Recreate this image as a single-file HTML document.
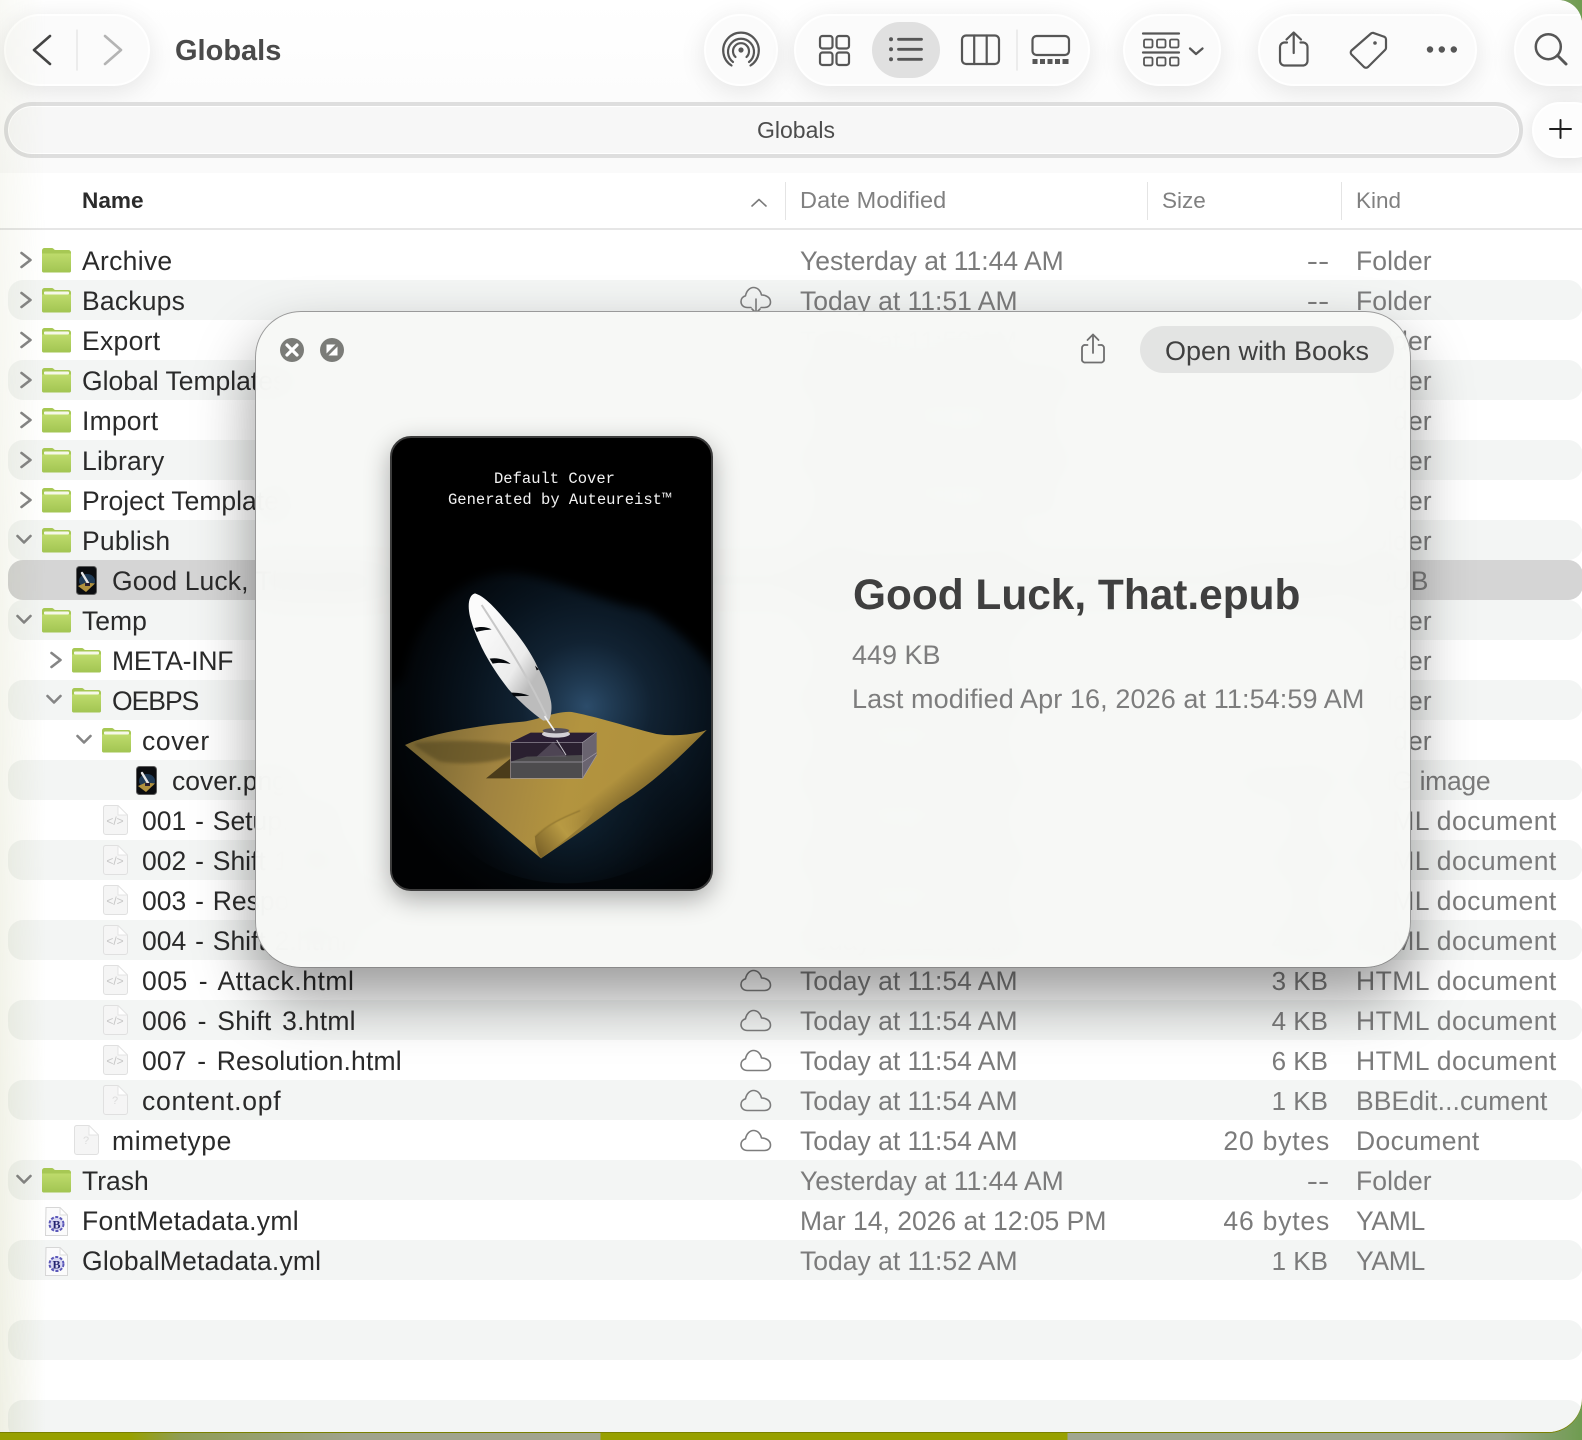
<!DOCTYPE html>
<html lang="en"><head><meta charset="utf-8"><title>Globals</title>
<style>
*{box-sizing:border-box}
html,body{margin:0;padding:0;width:1582px;height:1440px;overflow:hidden;font-family:"Liberation Sans",sans-serif;
background:linear-gradient(90deg,#97a000 0,#97a000 130px,#8f9d55 180px,#9fa38c 350px,#a2a58e 600px,#97a000 601px,#97a000 1067px,#9fa690 1068px,#a0a68f 1500px,#6f9c50 1582px)}
#win{position:absolute;left:-10px;top:0;width:1592px;height:1432px;background:#fff;border-radius:0 24px 34px 0;overflow:hidden;box-shadow:0 1px 0 #7a8000}
#in{position:absolute;left:10px;top:0;width:1582px;height:1432px}
#tb{position:absolute;left:0;top:0;width:1582px;height:173px;background:linear-gradient(#fff,#fafafa);overflow:hidden}
.p{position:absolute;top:14px;height:72px;border-radius:36px;background:#fbfbfb;border:2px solid #fff;box-shadow:0 5px 26px rgba(0,0,0,.10)}
#title{position:absolute;left:175px;top:33px;font-size:29px;line-height:36px;font-weight:700;color:#4a4a4a}
#tab{position:absolute;left:4px;top:102px;width:1519px;height:56px;border-radius:28px;border:4px solid #dedede;background:#f7f7f7;box-shadow:inset 0 0 0 1px #fff}
#tabt{position:absolute;left:757px;top:117px;font-size:23px;line-height:26px;color:#4c4c4c}
#plus{position:absolute;left:1532px;top:102px;width:70px;height:56px;border-radius:28px;background:#fdfdfd;border:2px solid #fff;box-shadow:0 3px 18px rgba(0,0,0,.10)}
.h{position:absolute;top:187px;line-height:27px;font-size:22.500px;color:#808080}
.sep{position:absolute;top:182px;width:1px;height:38px;background:#e4e4e4}
#hl{position:absolute;left:0;top:228px;width:1582px;height:2px;background:#e6e6e6}
#rows{position:absolute;left:8px;top:240px;width:1575px}
.r{position:relative;height:40px;border-radius:15px;font-size:26.500px;line-height:40px;color:#2a2a2a;white-space:nowrap}
.o{background:#f3f5f4}
.sel{background:#d5d5d5}
.r>*{position:absolute}
.n{top:1px}
.h1{word-spacing:3px}
.h2{word-spacing:1.500px}
.d{left:792px;font-size:26.500px;color:#7b7b7b;top:1px}
.s{right:255px;font-size:26px;color:#7b7b7b;top:1px}
.z{right:254px;transform:scaleX(1.3);transform-origin:100% 50%}
.b{letter-spacing:.8px;right:253px;font-size:26.500px}
.k{left:1348px;color:#7b7b7b;top:1px;letter-spacing:.1px}
.kh{letter-spacing:.45px}
.c{top:10px;width:16px;height:20px}
.f{top:7px;width:29px;height:26px}
.cl{left:732px;top:9px;width:32px;height:24px}
.doc{width:25px;height:30px;top:5px}
.th{top:6px;width:21px;height:29px}
.yml{top:7px;width:23px;height:29px}
#lg{position:absolute;left:0;top:0;width:46px;height:1432px;background:linear-gradient(90deg,#eff0e4,rgba(255,255,255,0));mix-blend-mode:multiply;pointer-events:none;-webkit-mask-image:linear-gradient(rgba(0,0,0,.35),#000);mask-image:linear-gradient(rgba(0,0,0,.35),#000)}
#m{position:absolute;left:255px;top:311px;width:1156px;height:657px;border-radius:46px;background:rgba(247,248,246,.95);backdrop-filter:blur(16px);border:1px solid #9a9a9a;border-bottom-color:#8a8a8a;box-shadow:0 30px 60px rgba(0,0,0,.40)}
#btn{position:absolute;left:1140px;top:326px;width:254px;height:47px;border-radius:24px;background:#e3e4e3;color:#404040;font-size:27px;line-height:51px;text-align:center}
#cv{position:absolute;left:390px;top:436px;width:323px;height:455px;border-radius:21px;background:#000;border:2px solid #3c3c3c;overflow:hidden;box-shadow:0 8px 26px rgba(0,0,0,.32)}
.mono{position:absolute;font-family:"Liberation Mono",monospace;font-size:15.500px;line-height:20px;color:#f2f2f2;white-space:nowrap}
.mt{position:absolute;left:852px;white-space:nowrap}
</style></head><body>

<svg width="0" height="0" style="position:absolute">
<defs>
<linearGradient id="fg" x1="0" y1="0" x2="0" y2="1"><stop offset="0" stop-color="#bedb6c"/><stop offset="1" stop-color="#a2c552"/></linearGradient>
<symbol id="ch-r" viewBox="0 0 16 20"><polyline points="3.500,3 12.500,10 3.500,17" fill="none" stroke="#858585" stroke-width="2.600" stroke-linecap="round" stroke-linejoin="round"/></symbol>
<symbol id="ch-d" viewBox="0 0 16 20"><polyline points="1.500,6 8,12.500 14.500,6" fill="none" stroke="#858585" stroke-width="2.600" stroke-linecap="round" stroke-linejoin="round"/></symbol>
<symbol id="fo" viewBox="0 0 29 26"><path d="M0 3.500A2.500 2.500 0 0 1 2.500 1H10c1.500 0 2 2 3.500 2H26.500A2.500 2.500 0 0 1 29 5.500V23.500A2 2 0 0 1 27 25.500H2A2 2 0 0 1 0 23.500Z" fill="#a7c854"/><path d="M0 6.500H29V23.500A2 2 0 0 1 27 25.500H2A2 2 0 0 1 0 23.500Z" fill="url(#fg)"/></symbol>
<symbol id="ff" viewBox="0 0 29 26"><path d="M0 3.500A2.500 2.500 0 0 1 2.500 1H10c1.500 0 2 2 3.500 2H26.500A2.500 2.500 0 0 1 29 5.500V23.500A2 2 0 0 1 27 25.500H2A2 2 0 0 1 0 23.500Z" fill="#a7c854"/><rect x="2" y="4.500" width="25" height="3" rx="1" fill="#f6f8ea"/><path d="M0 7.500H29V23.500A2 2 0 0 1 27 25.500H2A2 2 0 0 1 0 23.500Z" fill="url(#fg)"/></symbol>
<symbol id="cl" viewBox="0 0 32 24"><path d="M7.500 21.500C3.500 21.500 1 19 1 15.500 1 12.500 3 10.500 5.500 9.800 6.500 4.500 10 1.500 13.500 1.500 17.500 1.500 20.500 4.500 21.500 9 26 9 30.500 11.500 30.500 16 30.500 19.500 28 21.500 24.500 21.500Z" fill="none" stroke="#7d7d7d" stroke-width="1.600" stroke-linejoin="round"/></symbol>
<symbol id="doc" viewBox="0 0 25 30"><path d="M2.500.500H15L24.500 10V27A2.500 2.500 0 0 1 22 29.500H3A2.500 2.500 0 0 1 .500 27V3A2.500 2.500 0 0 1 2.500.500Z" fill="#f5f5f5" stroke="#e0e0e0"/><path d="M15 .500V10H24.500Z" fill="#fff" stroke="#e4e4e4"/></symbol>
<symbol id="th" viewBox="0 0 21 29"><rect x=".5" y=".5" width="20" height="28" rx="3" fill="#0b0d10" stroke="#5a5a5a"/><ellipse cx="11" cy="15" rx="8" ry="7" fill="#1f3a55"/><path d="M2 20L10 16.500 19 17.500 10 26Z" fill="#b0913e"/><path d="M6 7L12 17" stroke="#e8e8e8" stroke-width="2.400" stroke-linecap="round"/><rect x="9" y="17" width="5" height="3" fill="#2a2030"/></symbol>
<symbol id="yml" viewBox="0 0 23 29"><path d="M1 .500H15L22.500 8V28.500H.5Z" fill="#fbfbfb" stroke="#d6d6d6"/><path d="M15 .500V8H22.500Z" fill="#fff" stroke="#dcdcdc"/><circle cx="11.500" cy="17" r="7" fill="#d9d8f2" stroke="#5a57b8" stroke-width="2" stroke-dasharray="3 1.500"/></symbol>
<radialGradient id="gl" gradientUnits="userSpaceOnUse" cx="620" cy="440" r="650"><stop offset="0" stop-color="#2c4c6a"/><stop offset=".12" stop-color="#203a52"/><stop offset=".3" stop-color="#112232"/><stop offset=".55" stop-color="#08131d"/><stop offset=".8" stop-color="#03070b"/><stop offset="1" stop-color="#010203"/></radialGradient>
<radialGradient id="gl2" gradientUnits="userSpaceOnUse" cx="560" cy="740" r="360"><stop offset="0" stop-color="#12283a"/><stop offset=".6" stop-color="#0a1722" stop-opacity=".5"/><stop offset="1" stop-color="#05080c" stop-opacity="0"/></radialGradient>
<linearGradient id="pp" gradientUnits="userSpaceOnUse" x1="120" y1="500" x2="780" y2="640"><stop offset="0" stop-color="#7a6733"/><stop offset=".35" stop-color="#a08340"/><stop offset=".7" stop-color="#b3943f"/><stop offset="1" stop-color="#b0913d"/></linearGradient>
<linearGradient id="pe" gradientUnits="userSpaceOnUse" x1="680" y1="678" x2="720" y2="730"><stop offset="0" stop-color="#5f4c1f" stop-opacity="0"/><stop offset="1" stop-color="#5f4c1f" stop-opacity=".45"/></linearGradient>
<linearGradient id="fe" gradientUnits="userSpaceOnUse" x1="290" y1="210" x2="480" y2="330"><stop offset="0" stop-color="#fbfbfb"/><stop offset=".7" stop-color="#ececec"/><stop offset="1" stop-color="#bcbcbc"/></linearGradient>
<linearGradient id="fo2" gradientUnits="userSpaceOnUse" x1="480" y1="880" x2="650" y2="745"><stop offset="0" stop-color="#7d6429"/><stop offset=".45" stop-color="#b89a43"/><stop offset="1" stop-color="#b0913d" stop-opacity="0"/></linearGradient>
<filter id="b1" x="-20%" y="-20%" width="140%" height="140%"><feGaussianBlur stdDeviation="14"/></filter>
<filter id="b2"><feGaussianBlur stdDeviation="5"/></filter>
<filter id="b3"><feGaussianBlur stdDeviation="1.500"/></filter>
</defs>
</svg>

<div id="win"><div id="in">

<div id="tb">
 <div class="p" style="left:4px;width:146px"></div>
 <div class="p" style="left:704px;width:74px"></div>
 <div class="p" style="left:794px;width:296px"></div>
 <div style="position:absolute;left:872px;top:22px;width:68px;height:56px;border-radius:28px;background:#e0e0e0"></div>
 <div class="p" style="left:1123px;width:98px"></div>
 <div class="p" style="left:1258px;width:219px"></div>
 <div class="p" style="left:1514px;width:100px"></div>
 <div id="title">Globals</div>
 <div id="tab"></div>
 <div id="tabt">Globals</div>
 <div id="plus"></div>
 <svg width="1582" height="173" viewBox="0 0 1582 173" style="position:absolute;left:0;top:0" fill="none" stroke="#565656" stroke-width="2.200" stroke-linecap="round" stroke-linejoin="round">
  <polyline points="50,36 34,50 50,64" stroke="#444" stroke-width="2.600"/>
  <line x1="77" y1="30" x2="77" y2="70" stroke="#e8e8e8" stroke-width="1.500"/>
  <polyline points="105,36 121,50 105,64" stroke="#b4b4b4" stroke-width="2.600"/>
  <!-- airdrop -->
  <circle cx="741" cy="50" r="2.600" fill="#565656" stroke="none"/>
  <path d="M735.500 57A8 8 0 1 1 746.500 57"/>
  <path d="M733 62A13 13 0 1 1 749 62"/>
  <path d="M731.500 65.500A17.800 17.800 0 1 1 750.500 65.500"/>
  <!-- grid -->
  <rect x="820" y="36" width="12.500" height="12.500" rx="2.500"/><rect x="836.500" y="36" width="12.500" height="12.500" rx="2.500"/>
  <rect x="820" y="52.500" width="12.500" height="12.500" rx="2.500"/><rect x="836.500" y="52.500" width="12.500" height="12.500" rx="2.500"/>
  <!-- list -->
  <circle cx="891" cy="39.300" r="2" fill="#565656" stroke="none"/><circle cx="891" cy="49.300" r="2" fill="#565656" stroke="none"/><circle cx="891" cy="59.300" r="2" fill="#565656" stroke="none"/>
  <path d="M898.500 39.300H921.500M898.500 49.300H921.500M898.500 59.300H921.500" stroke-width="2.800"/>
  <!-- columns -->
  <rect x="962" y="35.500" width="37" height="28.500" rx="4"/><path d="M974.200 35.500V64M986.700 35.500V64"/>
  <line x1="1017" y1="30" x2="1017" y2="70" stroke="#e8e8e8" stroke-width="1.500"/>
  <!-- gallery -->
  <rect x="1032.500" y="36" width="36.500" height="19" rx="4"/>
  <g fill="#565656" stroke="none"><rect x="1032.500" y="59" width="5" height="5"/><rect x="1040" y="59" width="5" height="5"/><rect x="1047.500" y="59" width="5" height="5"/><rect x="1055" y="59" width="5" height="5"/><rect x="1062.500" y="59" width="6" height="5"/></g>
  <!-- group -->
  <path d="M1143 33.500H1179M1143 52.500H1179"/>
  <g stroke-width="1.800"><rect x="1144" y="39.500" width="8.500" height="8" rx="1.500"/><rect x="1157" y="39.500" width="8.500" height="8" rx="1.500"/><rect x="1170" y="39.500" width="8.500" height="8" rx="1.500"/>
  <rect x="1144" y="57.500" width="8.500" height="8" rx="1.500"/><rect x="1157" y="57.500" width="8.500" height="8" rx="1.500"/><rect x="1170" y="57.500" width="8.500" height="8" rx="1.500"/></g>
  <polyline points="1190,48.500 1196,54 1202.500,48.500" stroke-width="2.300"/>
  <!-- share -->
  <path d="M1287 42.500H1284A4.500 4.500 0 0 0 1280 47V61A4.500 4.500 0 0 0 1284 65.500H1303.500A4.500 4.500 0 0 0 1307.500 61V47A4.500 4.500 0 0 0 1303.500 42.500H1300.500"/>
  <path d="M1293.700 33.500V53M1286.500 39.500L1293.700 32.500 1301 39.500"/>
  <!-- tag -->
  <path d="M1351.500 50.500L1371 33.500A3 3 0 0 1 1373 32.800L1383.500 36.500A3 3 0 0 1 1386 39.500V48A3 3 0 0 1 1385 50L1368 67A3 3 0 0 1 1364 67L1351.500 54.500A3 3 0 0 1 1351.500 50.500Z"/>
  <circle cx="1375" cy="43" r="1.800" fill="#565656" stroke="none"/>
  <circle cx="1430" cy="49.500" r="3.200" fill="#565656" stroke="none"/><circle cx="1441.800" cy="49.500" r="3.200" fill="#565656" stroke="none"/><circle cx="1453.800" cy="49.500" r="3.200" fill="#565656" stroke="none"/>
  <!-- search -->
  <circle cx="1548.300" cy="46.700" r="12.500" stroke-width="2.500"/><path d="M1557.500 55.500L1566 64" stroke-width="3"/>
  <!-- plus -->
  <path d="M1560.500 120V138M1550 129H1571" stroke="#1f1f1f" stroke-width="2"/>
 </svg>
</div>

<div class="h" style="left:82px;font-size:22.600px;font-weight:700;color:#2b2b2b">Name</div>
<svg width="20" height="12" style="position:absolute;left:749px;top:197px"><polyline points="3,9 10,2.500 17,9" fill="none" stroke="#7a7a7a" stroke-width="1.600" stroke-linecap="round" stroke-linejoin="round"/></svg>
<div class="sep" style="left:785px"></div>
<div class="h" style="left:800px;font-size:23.500px;letter-spacing:.1px">Date Modified</div>
<div class="sep" style="left:1147px"></div>
<div class="h" style="left:1162px">Size</div>
<div class="sep" style="left:1341px"></div>
<div class="h" style="left:1356px">Kind</div>
<div id="hl"></div>

<div id="rows">
<div class="r"><svg class="c" style="left:10px"><use href="#ch-r"/></svg><svg class="f" style="left:34px"><use href="#fo"/></svg><span class="n" style="left:74px;letter-spacing:.3px">Archive</span><span class="d">Yesterday at 11:44 AM</span><span class="s z">--</span><span class="k">Folder</span></div>
<div class="r o"><svg class="c" style="left:10px"><use href="#ch-r"/></svg><svg class="f" style="left:34px"><use href="#ff"/></svg><span class="n" style="left:74px;letter-spacing:.2px">Backups</span><svg class="cl" style="top:6px;height:28px" viewBox="0 0 32 28" fill="none" stroke="#7d7d7d" stroke-width="1.600" stroke-linecap="round" stroke-linejoin="round"><path d="M11 21.500H7.500C3.500 21.500 1 19 1 15.500 1 12.500 3 10.500 5.500 9.800 6.500 4.500 10 1.500 13.500 1.500 17.500 1.500 20.500 4.500 21.500 9 26 9 30.500 11.500 30.500 16 30.500 19.500 28 21.500 24.500 21.500H21"/><path d="M16 13V26.500M12 23L16 27 20 23"/></svg><span class="d">Today at 11:51 AM</span><span class="s z">--</span><span class="k">Folder</span></div>
<div class="r"><svg class="c" style="left:10px"><use href="#ch-r"/></svg><svg class="f" style="left:34px"><use href="#ff"/></svg><span class="n" style="left:74px;letter-spacing:.3px">Export</span><span class="d">Today at 11:52 AM</span><span class="s z">--</span><span class="k">Folder</span></div>
<div class="r o"><svg class="c" style="left:10px"><use href="#ch-r"/></svg><svg class="f" style="left:34px"><use href="#ff"/></svg><span class="n" style="left:74px">Global Templates</span><span class="d">Yesterday at 11:44 AM</span><span class="s z">--</span><span class="k">Folder</span></div>
<div class="r"><svg class="c" style="left:10px"><use href="#ch-r"/></svg><svg class="f" style="left:34px"><use href="#ff"/></svg><span class="n" style="left:74px;letter-spacing:.2px">Import</span><span class="d">Yesterday at 11:44 AM</span><span class="s z">--</span><span class="k">Folder</span></div>
<div class="r o"><svg class="c" style="left:10px"><use href="#ch-r"/></svg><svg class="f" style="left:34px"><use href="#ff"/></svg><span class="n" style="left:74px;letter-spacing:.2px">Library</span><span class="d">Yesterday at 11:44 AM</span><span class="s z">--</span><span class="k">Folder</span></div>
<div class="r"><svg class="c" style="left:10px"><use href="#ch-r"/></svg><svg class="f" style="left:34px"><use href="#ff"/></svg><span class="n" style="left:74px">Project Templates</span><span class="d">Yesterday at 11:44 AM</span><span class="s z">--</span><span class="k">Folder</span></div>
<div class="r o"><svg class="c" style="left:8px"><use href="#ch-d"/></svg><svg class="f" style="left:34px"><use href="#ff"/></svg><span class="n" style="left:74px;letter-spacing:.2px">Publish</span><span class="d">Today at 11:54 AM</span><span class="s z">--</span><span class="k">Folder</span></div>
<div class="r sel"><svg class="th" style="left:68px"><use href="#th"/></svg><span class="n" style="left:104px;letter-spacing:.1px">Good Luck, That.epub</span><span class="d">Today at 11:54 AM</span><span class="s">449 KB</span><span class="k">EPUB</span></div>
<div class="r o"><svg class="c" style="left:8px"><use href="#ch-d"/></svg><svg class="f" style="left:34px"><use href="#ff"/></svg><span class="n" style="left:74px">Temp</span><span class="d">Today at 11:54 AM</span><span class="s z">--</span><span class="k">Folder</span></div>
<div class="r"><svg class="c" style="left:40px"><use href="#ch-r"/></svg><svg class="f" style="left:64px"><use href="#ff"/></svg><span class="n" style="left:104px;letter-spacing:-.25px">META-INF</span><span class="d">Today at 11:54 AM</span><span class="s z">--</span><span class="k">Folder</span></div>
<div class="r o"><svg class="c" style="left:38px"><use href="#ch-d"/></svg><svg class="f" style="left:64px"><use href="#ff"/></svg><span class="n" style="left:104px;letter-spacing:-1px">OEBPS</span><span class="d">Today at 11:54 AM</span><span class="s z">--</span><span class="k">Folder</span></div>
<div class="r"><svg class="c" style="left:68px"><use href="#ch-d"/></svg><svg class="f" style="left:94px"><use href="#ff"/></svg><span class="n" style="left:134px;letter-spacing:.6px">cover</span><span class="d">Today at 11:54 AM</span><span class="s z">--</span><span class="k">Folder</span></div>
<div class="r o"><svg class="th" style="left:128px"><use href="#th"/></svg><span class="n" style="left:164px">cover.png</span><span class="d">Today at 11:54 AM</span><span class="s">210 KB</span><span class="k" style="letter-spacing:-.3px">PNG image</span></div>
<div class="r"><svg class="doc" style="left:95px" viewBox="0 0 25 30"><use href="#doc" width="25" height="30"/><text x="12" y="20" font-size="12" text-anchor="middle" fill="#c6c6c6" font-family="Liberation Sans">&lt;/&gt;</text></svg><span class="n h2" style="left:134px">001 - Setup.html</span><span class="d">Today at 11:54 AM</span><span class="s">3 KB</span><span class="k kh">HTML document</span></div>
<div class="r o"><svg class="doc" style="left:95px" viewBox="0 0 25 30"><use href="#doc" width="25" height="30"/><text x="12" y="20" font-size="12" text-anchor="middle" fill="#c6c6c6" font-family="Liberation Sans">&lt;/&gt;</text></svg><span class="n h2" style="left:134px">002 - Shift 1.html</span><span class="d">Today at 11:54 AM</span><span class="s">4 KB</span><span class="k kh">HTML document</span></div>
<div class="r"><svg class="doc" style="left:95px" viewBox="0 0 25 30"><use href="#doc" width="25" height="30"/><text x="12" y="20" font-size="12" text-anchor="middle" fill="#c6c6c6" font-family="Liberation Sans">&lt;/&gt;</text></svg><span class="n h2" style="left:134px">003 - Response.html</span><span class="d">Today at 11:54 AM</span><span class="s">4 KB</span><span class="k kh">HTML document</span></div>
<div class="r o"><svg class="doc" style="left:95px" viewBox="0 0 25 30"><use href="#doc" width="25" height="30"/><text x="12" y="20" font-size="12" text-anchor="middle" fill="#c6c6c6" font-family="Liberation Sans">&lt;/&gt;</text></svg><span class="n h2" style="left:134px">004 - Shift 2.html</span><span class="d">Today at 11:54 AM</span><span class="s">4 KB</span><span class="k kh">HTML document</span></div>
<div class="r"><svg class="doc" style="left:95px" viewBox="0 0 25 30"><use href="#doc" width="25" height="30"/><text x="12" y="20" font-size="12" text-anchor="middle" fill="#c6c6c6" font-family="Liberation Sans">&lt;/&gt;</text></svg><span class="n h1" style="left:134px;letter-spacing:.53px">005 - Attack.html</span><svg class="cl"><use href="#cl"/></svg><span class="d">Today at 11:54 AM</span><span class="s">3 KB</span><span class="k kh">HTML document</span></div>
<div class="r o"><svg class="doc" style="left:95px" viewBox="0 0 25 30"><use href="#doc" width="25" height="30"/><text x="12" y="20" font-size="12" text-anchor="middle" fill="#c6c6c6" font-family="Liberation Sans">&lt;/&gt;</text></svg><span class="n h1" style="left:134px;letter-spacing:.25px">006 - Shift 3.html</span><svg class="cl"><use href="#cl"/></svg><span class="d">Today at 11:54 AM</span><span class="s">4 KB</span><span class="k kh">HTML document</span></div>
<div class="r"><svg class="doc" style="left:95px" viewBox="0 0 25 30"><use href="#doc" width="25" height="30"/><text x="12" y="20" font-size="12" text-anchor="middle" fill="#c6c6c6" font-family="Liberation Sans">&lt;/&gt;</text></svg><span class="n h1" style="left:134px;letter-spacing:.16px">007 - Resolution.html</span><svg class="cl"><use href="#cl"/></svg><span class="d">Today at 11:54 AM</span><span class="s">6 KB</span><span class="k kh">HTML document</span></div>
<div class="r o"><svg class="doc" style="left:95px" viewBox="0 0 25 30"><use href="#doc" width="25" height="30"/><text x="12" y="19" font-size="11" text-anchor="middle" fill="#dcdcdc" font-family="Liberation Sans">?</text></svg><span class="n" style="left:134px;letter-spacing:.75px">content.opf</span><svg class="cl"><use href="#cl"/></svg><span class="d">Today at 11:54 AM</span><span class="s">1 KB</span><span class="k">BBEdit...cument</span></div>
<div class="r"><svg class="doc" style="left:66px" viewBox="0 0 25 30"><use href="#doc" width="25" height="30"/><text x="12" y="19" font-size="11" text-anchor="middle" fill="#dcdcdc" font-family="Liberation Sans">?</text></svg><span class="n" style="left:104px;letter-spacing:.65px">mimetype</span><svg class="cl"><use href="#cl"/></svg><span class="d">Today at 11:54 AM</span><span class="s b">20 bytes</span><span class="k" style="letter-spacing:.35px">Document</span></div>
<div class="r o"><svg class="c" style="left:8px"><use href="#ch-d"/></svg><svg class="f" style="left:34px"><use href="#fo"/></svg><span class="n" style="left:74px">Trash</span><span class="d">Yesterday at 11:44 AM</span><span class="s z">--</span><span class="k">Folder</span></div>
<div class="r"><svg class="yml" style="left:37px" viewBox="0 0 23 29"><use href="#yml" width="23" height="29"/><text x="11.500" y="21.500" font-size="12" font-weight="700" text-anchor="middle" fill="#23236e" font-family="Liberation Serif">B</text></svg><span class="n" style="left:74px;letter-spacing:.3px">FontMetadata.yml</span><span class="d">Mar 14, 2026 at 12:05 PM</span><span class="s b">46 bytes</span><span class="k" style="letter-spacing:-.3px">YAML</span></div>
<div class="r o"><svg class="yml" style="left:37px" viewBox="0 0 23 29"><use href="#yml" width="23" height="29"/><text x="11.500" y="21.500" font-size="12" font-weight="700" text-anchor="middle" fill="#23236e" font-family="Liberation Serif">B</text></svg><span class="n" style="left:74px;letter-spacing:.2px">GlobalMetadata.yml</span><span class="d">Today at 11:52 AM</span><span class="s">1 KB</span><span class="k" style="letter-spacing:-.3px">YAML</span></div>
<div class="r"></div>
<div class="r o"></div>
<div class="r"></div>
<div class="r o"></div>
</div>

<div id="lg"></div>

<div id="m"></div>
<svg width="1582" height="400" viewBox="0 0 1582 400" style="position:absolute;left:0;top:0" fill="none">
 <circle cx="292" cy="350" r="12" fill="#7b7c78"/>
 <path d="M287 345L297 355M297 345L287 355" stroke="#fff" stroke-width="3.200" stroke-linecap="round"/>
 <circle cx="332" cy="350" r="12" fill="#7b7c78"/>
 <path d="M326.500 344.500H335.500L326.500 353.500ZM337.500 355.500H328.500L337.500 346.500Z" fill="#fff"/>
 <g stroke="#6f6f6f" stroke-width="1.800" stroke-linecap="round" stroke-linejoin="round">
  <path d="M1087.500 345H1085.500A3 3 0 0 0 1082 348V359A3 3 0 0 0 1085.500 362.500H1100.500A3 3 0 0 0 1104 359V348A3 3 0 0 0 1100.500 345H1098.500"/>
  <path d="M1093 335V353M1087.500 340L1093 334.500 1098.500 340"/>
 </g>
</svg>
<div id="btn">Open with Books</div>

<div id="cv">
 <svg width="340" height="340" viewBox="0 0 1020 1020" style="position:absolute;left:-12px;top:122px">
  <rect width="1020" height="1020" fill="url(#gl)"/>
  <ellipse cx="560" cy="740" rx="360" ry="230" fill="url(#gl2)"/>
  <!-- black upper mask -->
  <path d="M-40 -40V420L70 360C110 130 280 20 420 40C540 60 680 130 800 150C900 210 1000 300 1060 420V-40Z" fill="#000" filter="url(#b1)"/>
  <!-- paper -->
  <path d="M75 555C150 520 300 495 430 485C480 478 530 452 575 456C650 470 760 505 830 522C880 530 940 525 980 510C900 590 820 670 720 730C640 790 550 850 483 895Z" fill="url(#pp)"/>
  <path d="M75 555C150 520 300 495 430 485C480 478 530 452 575 456C650 470 760 505 830 522C880 530 940 525 980 510C900 590 820 670 720 730C640 790 550 850 483 895Z" fill="url(#pe)"/>
  <path d="M465 830C510 790 570 765 650 735C640 770 610 795 585 815C550 845 515 870 483 895C470 875 465 850 465 830Z" fill="url(#fo2)"/>
  <path d="M465 830C500 795 550 772 600 752" stroke="#6f5a24" stroke-width="3" fill="none" opacity=".6" filter="url(#b3)"/>
  <!-- shadows -->
  <path d="M100 550C180 540 320 540 420 555L395 590C340 610 240 615 180 605C150 590 120 570 100 550Z" fill="#4c3f1e" opacity=".5" filter="url(#b2)"/>
  <path d="M318 655L392 595V655Z" fill="#4a3b1a"/>
  <!-- ink well -->
  <path d="M608 547L650 516V585L608 655Z" fill="#6a6470"/>
  <path d="M392 547L452 518H650L608 547Z" fill="#2a1e33"/>
  <path d="M392 547H608V655H392Z" fill="#2a2030"/>
  <path d="M392 605L440 590 608 585V655H392Z" fill="#4d4c4e"/>
  <path d="M520 545L560 590H470Z" fill="#7a7480" opacity=".45"/>
  <path d="M392 547H608V655H392ZM392 606H608M608 547L650 516M608 655L650 585M608 606L650 578" stroke="#a09aa6" stroke-width="2" fill="none"/>
  <ellipse cx="528" cy="522" rx="42" ry="11" fill="#d3d1d6"/>
  <ellipse cx="528" cy="512" rx="40" ry="8" fill="#55505a"/>
  <path d="M530 540L558 585" stroke="#c9c6cc" stroke-width="3"/>
  <!-- feather -->
  <path d="M285 100C266 105 262 135 270 170 280 208 290 228 305 262 325 302 350 342 385 387 420 427 455 457 490 482L508 480C514 465 517 440 512 420 502 370 477 330 472 320 457 285 427 240 397 205 362 165 322 112 285 100Z" fill="url(#fe)"/>
  <path d="M305 135C360 220 440 340 500 470" stroke="#c8c8c8" stroke-width="6" fill="none"/>
  <path d="M283 204C300 199 320 200 335 208C318 210 300 212 290 216ZM329 296C350 292 374 297 392 312C370 307 350 308 338 311ZM393 398C410 397 430 400 448 407C425 409 410 408 402 410ZM465 317L477 328 470 331Z" fill="#05080c"/>
  <path d="M495 470L522 510" stroke="#f2f2f2" stroke-width="5" stroke-linecap="round"/>
 </svg>
</div>
<div class="mono" style="left:494px;top:469px">Default Cover</div>
<div class="mono" style="left:448px;top:490px">Generated by Auteureist™</div>

<div class="mt" style="top:570px;font-size:42.400px;line-height:50px;font-weight:700;color:#3f3f3f;left:853px">Good Luck, That.epub</div>
<div class="mt" style="top:639px;font-size:27px;line-height:32px;color:#7d7d7d">449 KB</div>
<div class="mt" style="top:683px;font-size:27px;line-height:32px;color:#7d7d7d;letter-spacing:.1px">Last modified Apr 16, 2026 at 11:54:59 AM</div>

</div></div>
</body></html>
